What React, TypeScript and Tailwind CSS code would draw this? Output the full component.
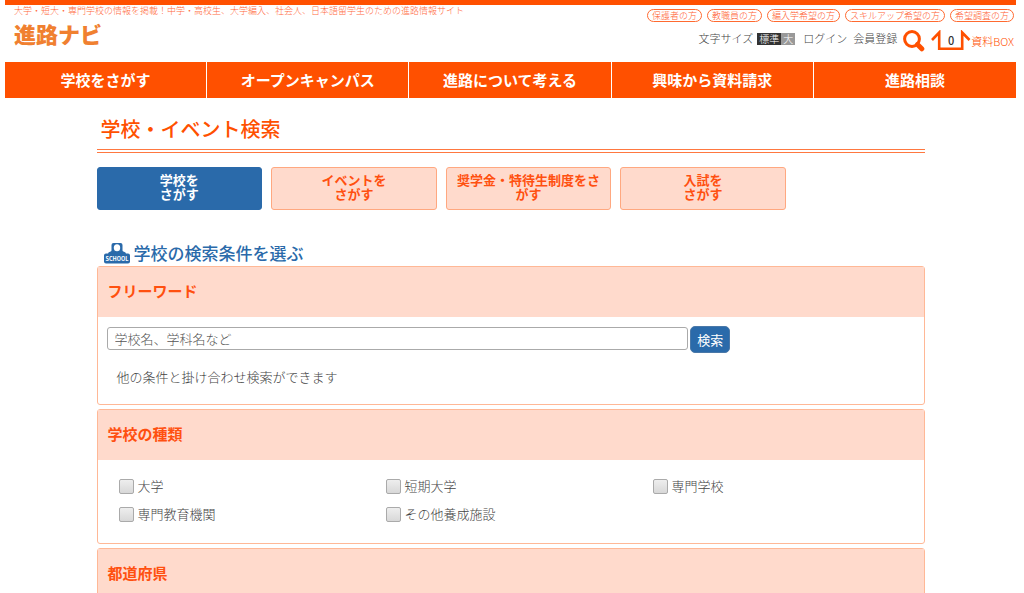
import React, { useState } from 'react';

const audiences = ['保護者の方', '教職員の方', '編入学希望の方', 'スキルアップ希望の方', '希望調査の方'];

const navItems = ['学校をさがす', 'オープンキャンパス', '進路について考える', '興味から資料請求', '進路相談'];

const tabs = [
  { id: 'school', label: '学校を\nさがす' },
  { id: 'event', label: 'イベントを\nさがす' },
  { id: 'scholarship', label: '奨学金・特待生制度をさがす' },
  { id: 'exam', label: '入試を\nさがす' },
];

const schoolTypes = ['大学', '短期大学', '専門学校', '専門教育機関', 'その他養成施設'];

function SearchIcon() {
  return (
    <svg width="22" height="22" viewBox="0 0 22 22" fill="none" stroke="#ff5000" aria-hidden="true">
      <circle cx="9" cy="9" r="7.4" strokeWidth="3" />
      <path d="M14.5 14.5 18.8 18.8" strokeWidth="5" strokeLinecap="round" />
    </svg>
  );
}

function BoxIcon() {
  return (
    <svg width="40" height="21" viewBox="0 0 40 21" fill="none" stroke="#ff5000" strokeWidth="2.6" aria-hidden="true">
      <path d="M1 10 8.2 2.5V18.8H31.2V2.5L38.5 10" />
    </svg>
  );
}

function SchoolIcon() {
  return (
    <svg width="26" height="21" viewBox="0 0 26 21" aria-hidden="true">
      <path d="M9.5 0h7q2 0 2 2v5.500q0 1 1.500 1.300 2 .5 2 2.200h-18q0-1.700 2-2.200 1.500-.3 1.500-1.300V2q0-2 2-2z" fill="#2a6aaa" />
      <ellipse cx="13" cy="4.800" rx="3.200" ry="3.500" fill="#fff" />
      <rect x="0" y="10.500" width="26" height="10" rx="2" fill="#2a6aaa" />
      <text x="13" y="17.800" textAnchor="middle" fontSize="5.500" fontWeight="700" fill="#fff">
        SCHOOL
      </text>
    </svg>
  );
}

function Header() {
  return (
    <header>
      <div className="flex h-[62px] justify-between border-t-[5px] border-[#ff5000] pr-[2px] pl-[9px]">
        <div>
          <p className="text-[9px] leading-3 font-light whitespace-nowrap text-[#ff6a40]">
            大学・短大・専門学校の情報を掲載！中学・高校生、大学編入、社会人、日本語留学生のための進路情報サイト
          </p>
          <a href="#" className="block text-[22px] leading-8 font-black text-[#f08030]">
            進路ナビ
          </a>
        </div>
        <div className="flex flex-col items-end pt-1">
          <ul className="flex gap-[5px]">
            {audiences.map((name) => (
              <li key={name}>
                <a
                  href="#"
                  className="block rounded-full border border-[#ff6a30] px-1 text-[9px] leading-[11px] font-light whitespace-nowrap text-[#ff6030]"
                >
                  {name}
                </a>
              </li>
            ))}
          </ul>
          <div className="mt-2 flex items-start text-[11px] leading-4 font-light whitespace-nowrap text-[#444]">
            <span>文字サイズ</span>
            <div className="mt-[3px] ml-1 flex text-[10px] leading-3 text-white">
              <button className="bg-[#333] px-[2px]">標準</button>
              <button className="bg-[#999] px-[2px]">大</button>
            </div>
            <a href="#" className="ml-2">ログイン</a>
            <a href="#" className="ml-[6px]">会員登録</a>
            <button className="ml-[6px]" aria-label="検索">
              <SearchIcon />
            </button>
            <a href="#" className="ml-[6px] flex items-center text-[#ff5000]">
              <span className="relative">
                <BoxIcon />
                <span className="absolute inset-0 text-center leading-5 font-medium text-[#333]">0</span>
              </span>
              資料BOX
            </a>
          </div>
        </div>
      </div>
      <nav className="grid grid-cols-5 divide-x divide-white bg-[#ff5000]">
        {navItems.map((item) => (
          <a key={item} href="#" className="py-[6px] text-center text-[15px] leading-6 font-bold text-white">
            {item}
          </a>
        ))}
      </nav>
    </header>
  );
}

function Panel({ title, children }: { title: string; children?: React.ReactNode }) {
  return (
    <section className="mb-1 rounded-[3px] border border-[#ffb896]">
      <h3 className="bg-[#ffdacc] px-[10px] pt-3 pb-[14px] text-[15px] leading-6 font-bold text-[#ff5010]">{title}</h3>
      {children}
    </section>
  );
}

function App() {
  const [activeTab, setActiveTab] = useState('school');
  const [keyword, setKeyword] = useState('');

  return (
    <div className="min-h-screen bg-white pr-2 pl-[5px] font-['Noto_Sans_CJK_JP',sans-serif] text-[#444]" lang="ja">
      <Header />
      <main className="mx-auto max-w-[828px]">
        <h1 className="mt-4 border-b-4 border-double border-[#ff7840] px-1 pb-[5px] text-[20px] leading-[30px] font-medium text-[#ff5000]">
          学校・イベント検索
        </h1>

        <div className="mt-[14px] flex gap-[9px]">
          {tabs.map((tab) => (
            <button
              key={tab.id}
              onClick={() => setActiveTab(tab.id)}
              className={`h-[43px] w-1/5 rounded-[3px] border px-2 pb-1 text-[13px] leading-[14px] font-bold whitespace-pre-line ${
                activeTab === tab.id
                  ? 'border-[#2a6aaa] bg-[#2a6aaa] text-white'
                  : 'border-[#ffa880] bg-[#ffdacc] text-[#ff5010]'
              }`}
            >
              {tab.label}
            </button>
          ))}
        </div>

        <h2 className="mt-[30px] flex items-center gap-1 px-[7px] text-[17px] leading-[26px] font-medium text-[#2a6aaa]">
          <SchoolIcon />
          学校の検索条件を選ぶ
        </h2>

        <Panel title="フリーワード">
          <div className="px-[9px] pt-[9px] pb-[17px]">
            <form className="flex items-start gap-[2px]" onSubmit={(e) => e.preventDefault()}>
              <input
                type="text"
                aria-label="フリーワード"
                placeholder="学校名、学科名など"
                value={keyword}
                onChange={(e) => setKeyword(e.target.value)}
                className="mt-px h-[23px] w-[72%] rounded-[3px] border border-[#aaa] px-[7px] text-[13px] font-light placeholder:text-[#555]"
              />
              <button className="rounded-[5px] border border-[#4a78a8] bg-[#2a6aaa] px-[6px] text-[13px] leading-[25px] text-white">
                検索
              </button>
            </form>
            <p className="mt-[14px] px-[10px] text-[13px] leading-5 font-light">他の条件と掛け合わせ検索ができます</p>
          </div>
        </Panel>

        <Panel title="学校の種類">
          <ul className="grid grid-cols-3 gap-y-2 pt-4 pr-1 pb-[19px] pl-[21px]">
            {schoolTypes.map((type) => (
              <li key={type}>
                <label className="flex items-center gap-1 text-[13px] leading-5 font-light">
                  <input
                    type="checkbox"
                    className="size-[15px] appearance-none rounded-[2px] border border-[#aaa] bg-linear-to-b from-[#eee] to-[#d8d8d8] checked:bg-[#2a6aaa] checked:bg-none"
                  />
                  {type}
                </label>
              </li>
            ))}
          </ul>
        </Panel>

        <Panel title="都道府県" />
      </main>
    </div>
  );
}

export default App;
